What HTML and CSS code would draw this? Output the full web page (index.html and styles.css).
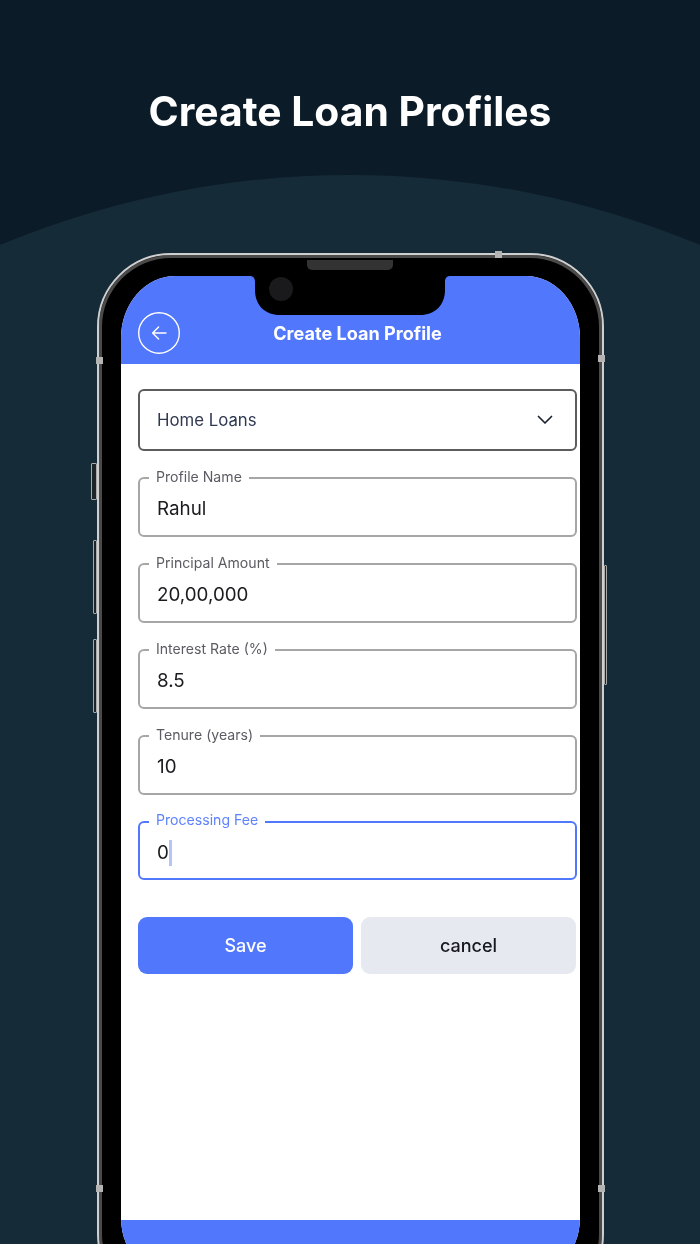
FILE: index.html
```html
<!DOCTYPE html>
<html lang="en">
<head>
<meta charset="utf-8">
<title>Create Loan Profiles</title>
<link rel="stylesheet" href="styles.css">
</head>
<body>
<div class="arc"></div>
<h1 class="hero">Create Loan Profiles</h1>
<div class="phone">
  <span class="side side-mute"></span>
  <span class="side side-up"></span>
  <span class="side side-down"></span>
  <span class="side side-power"></span>
  <span class="tick tick-top"></span>
  <span class="tick tick-left"></span>
  <span class="tick tick-right"></span>
  <span class="tick tick-left-low"></span>
  <span class="tick tick-right-low"></span>
  <span class="speaker"></span>
  <div class="screen">
    <svg class="notch" viewBox="0 0 200 39" width="200" height="39" aria-hidden="true">
      <path d="M0 0C3 0 5 2 5 6V14C5 29 15 39 30 39H170C185 39 195 29 195 14V6C195 2 197 0 200 0Z" fill="#000"/>
    </svg>
    <span class="camera"></span>
    <header class="bar">
      <svg class="back" viewBox="0 0 42 42" width="42" height="42" aria-hidden="true">
        <circle cx="21" cy="21" r="20.3" fill="none" stroke="#fff" stroke-width="1.4"/>
        <path d="M28 21H15M20.6 15 14.6 21l6 6" fill="none" stroke="#fff" stroke-width="1.4" stroke-linecap="round" stroke-linejoin="round"/>
      </svg>
      <div class="bar-title">Create Loan Profile</div>
    </header>
    <main class="form">
      <div class="select">
        <span>Home Loans</span>
        <svg viewBox="0 0 16 10" width="16" height="10" aria-hidden="true">
          <path d="M1.5 1.5 8 8l6.5-6.5" fill="none" stroke="#1c2230" stroke-width="1.7" stroke-linecap="round" stroke-linejoin="round"/>
        </svg>
      </div>
      <div class="field"><label class="field-label">Profile Name</label><div class="value">Rahul</div></div>
      <div class="field"><label class="field-label">Principal Amount</label><div class="value">20,00,000</div></div>
      <div class="field"><label class="field-label">Interest Rate (%)</label><div class="value">8.5</div></div>
      <div class="field"><label class="field-label">Tenure (years)</label><div class="value">10</div></div>
      <div class="field field-active"><label class="field-label">Processing Fee</label><div class="value">0<span class="caret"></span></div></div>
      <div class="actions">
        <button class="btn btn-save">Save</button>
        <button class="btn btn-cancel">cancel</button>
      </div>
    </main>
    <footer class="foot"></footer>
  </div>
</div>
</body>
</html>
```
FILE: styles.css
```css
* { box-sizing: border-box; }
html, body { margin: 0; padding: 0; height: 1244px; overflow: hidden; }
body {
  position: relative;
  width: 700px;
  background: #0b1c28;
  font-family: Inter, "Liberation Sans", sans-serif;
  padding-top: 87px;
}
.arc {
  position: absolute;
  left: -560px;
  top: 175px;
  width: 1820px;
  height: 1820px;
  border-radius: 50%;
  background: #162b38;
}
.hero {
  position: relative;
  margin: 0;
  height: 48px;
  font-size: 40.8px;
  line-height: 48px;
  font-weight: 700;
  color: #fff;
  text-align: center;
  filter: blur(0.3px);
}
.phone {
  position: relative;
  margin: 118px 0 0 97px;
  width: 507px;
  height: 1055px;
  padding: 21px 22px;
  background: #000;
  border: 2px solid #cfcfcf;
  border-radius: 74px;
  box-shadow: inset 0 0 0 3px #4a4a4a;
  filter: blur(0.4px);
}
.side {
  position: absolute;
  background: #1d2528;
  border: 1px solid #a9a9a9;
  border-radius: 1px;
}
.side-mute { left: -8px; top: 208px; width: 6px; height: 37px; }
.side-up { left: -6px; top: 285px; width: 4px; height: 74px; }
.side-down { left: -6px; top: 384px; width: 4px; height: 74px; }
.side-power { right: -5px; top: 310px; width: 3px; height: 120px; }
.tick { position: absolute; background: #b4b4b4; }
.tick-top { left: 396px; top: -4px; width: 7px; height: 7px; }
.tick-left { left: -3px; top: 102px; width: 7px; height: 7px; }
.tick-right { right: -3px; top: 100px; width: 7px; height: 7px; }
.tick-left-low { left: -3px; top: 930px; width: 7px; height: 7px; }
.tick-right-low { right: -3px; top: 930px; width: 7px; height: 7px; }
.speaker {
  position: absolute;
  z-index: 2;
  left: 208px;
  top: 5px;
  width: 86px;
  height: 10px;
  background: #333;
  border-radius: 0 0 5px 5px;
}
.screen {
  position: relative;
  display: flex;
  flex-direction: column;
  height: 1008px;
  overflow: hidden;
  background: #fff;
  border-radius: 54px 54px 66px 66px / 62px 62px 66px 66px;
}
.notch { position: absolute; left: 129px; top: 0; display: block; }
.camera {
  position: absolute;
  left: 148px;
  top: 1px;
  width: 24px;
  height: 24px;
  border-radius: 50%;
  background: #1a1a1c;
}
.bar {
  flex: none;
  display: grid;
  grid-template-columns: 42px 1fr 42px;
  align-items: center;
  height: 88px;
  padding: 36px 3px 10px 17px;
  background: #5177fd;
}
.back { display: block; }
.bar-title {
  font-size: 18.1px;
  font-weight: 700;
  color: #fff;
  text-align: center;
}
.form {
  flex: 1;
  display: flex;
  flex-direction: column;
  padding: 25px 3px 0 17px;
  background: #fff;
}
.select {
  display: flex;
  align-items: center;
  justify-content: space-between;
  height: 62px;
  padding: 0 22px 0 17px;
  border: 2px solid #5c5c5c;
  border-radius: 6px;
  font-size: 16.8px;
  color: #2f3850;
}
.field {
  position: relative;
  display: flex;
  align-items: center;
  height: 60px;
  margin-top: 26px;
  padding: 4px 0 0 17px;
  border: 2px solid #a6a6a6;
  border-radius: 6px;
}
.field-label {
  position: absolute;
  left: 9px;
  top: -11px;
  padding: 0 7px;
  background: #fff;
  font-size: 14.1px;
  line-height: 18px;
  color: #5b5b63;
}
.value {
  display: flex;
  align-items: center;
  font-size: 18.8px;
  line-height: 26px;
  color: #1b1b1f;
}
.field-active { border-color: #5177fd; height: 59px; }
.field-active .field-label { color: #5e82fd; top: -12px; }
.caret { width: 3px; height: 26px; background: #b3c5fb; }
.actions {
  display: flex;
  gap: 8px;
  margin: 37px 1px 0 0;
}
.btn {
  flex: 1;
  height: 57px;
  border: 0;
  border-radius: 9px;
  font-family: inherit;
  font-size: 18px;
  font-weight: 450;
}
.btn-save { background: #5177fd; color: #fff; }
.btn-cancel { background: #e6e9ef; color: #16181d; }
.foot {
  flex: none;
  height: 64px;
  background: #5177fd;
}
```
